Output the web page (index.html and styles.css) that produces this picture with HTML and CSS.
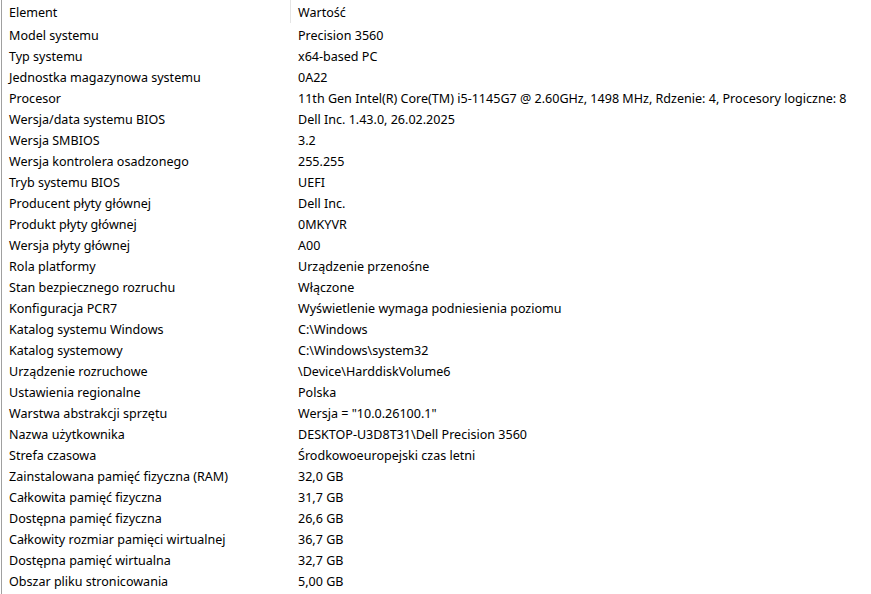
FILE: index.html
```html
<!DOCTYPE html>
<html lang="pl">
<head>
<meta charset="utf-8">
<title>Informacje o systemie</title>
<link rel="stylesheet" href="styles.css">
</head>
<body>
<div class="list">
  <div class="header">
    <div class="hcell hfirst">Element</div>
    <div class="hcell">Wartość</div>
  </div>
  <div class="rows">
    <div class="row"><span class="c1">Model systemu</span><span class="c2">Precision 3560</span></div>
    <div class="row"><span class="c1">Typ systemu</span><span class="c2">x64-based PC</span></div>
    <div class="row"><span class="c1">Jednostka magazynowa systemu</span><span class="c2">0A22</span></div>
    <div class="row"><span class="c1">Procesor</span><span class="c2">11th Gen Intel(R) Core(TM) i5-1145G7 @ 2.60GHz, 1498 MHz, Rdzenie: 4, Procesory logiczne: 8</span></div>
    <div class="row"><span class="c1">Wersja/data systemu BIOS</span><span class="c2">Dell Inc. 1.43.0, 26.02.2025</span></div>
    <div class="row"><span class="c1">Wersja SMBIOS</span><span class="c2">3.2</span></div>
    <div class="row"><span class="c1">Wersja kontrolera osadzonego</span><span class="c2">255.255</span></div>
    <div class="row"><span class="c1">Tryb systemu BIOS</span><span class="c2">UEFI</span></div>
    <div class="row"><span class="c1">Producent płyty głównej</span><span class="c2">Dell Inc.</span></div>
    <div class="row"><span class="c1">Produkt płyty głównej</span><span class="c2">0MKYVR</span></div>
    <div class="row"><span class="c1">Wersja płyty głównej</span><span class="c2">A00</span></div>
    <div class="row"><span class="c1">Rola platformy</span><span class="c2">Urządzenie przenośne</span></div>
    <div class="row"><span class="c1">Stan bezpiecznego rozruchu</span><span class="c2">Włączone</span></div>
    <div class="row"><span class="c1">Konfiguracja PCR7</span><span class="c2">Wyświetlenie wymaga podniesienia poziomu</span></div>
    <div class="row"><span class="c1">Katalog systemu Windows</span><span class="c2">C:\Windows</span></div>
    <div class="row"><span class="c1">Katalog systemowy</span><span class="c2">C:\Windows\system32</span></div>
    <div class="row"><span class="c1">Urządzenie rozruchowe</span><span class="c2">\Device\HarddiskVolume6</span></div>
    <div class="row"><span class="c1">Ustawienia regionalne</span><span class="c2">Polska</span></div>
    <div class="row"><span class="c1">Warstwa abstrakcji sprzętu</span><span class="c2">Wersja = "10.0.26100.1"</span></div>
    <div class="row"><span class="c1">Nazwa użytkownika</span><span class="c2">DESKTOP-U3D8T31\Dell Precision 3560</span></div>
    <div class="row"><span class="c1">Strefa czasowa</span><span class="c2">Środkowoeuropejski czas letni</span></div>
    <div class="row"><span class="c1">Zainstalowana pamięć fizyczna (RAM)</span><span class="c2">32,0 GB</span></div>
    <div class="row"><span class="c1">Całkowita pamięć fizyczna</span><span class="c2">31,7 GB</span></div>
    <div class="row"><span class="c1">Dostępna pamięć fizyczna</span><span class="c2">26,6 GB</span></div>
    <div class="row"><span class="c1">Całkowity rozmiar pamięci wirtualnej</span><span class="c2">36,7 GB</span></div>
    <div class="row"><span class="c1">Dostępna pamięć wirtualna</span><span class="c2">32,7 GB</span></div>
    <div class="row"><span class="c1">Obszar pliku stronicowania</span><span class="c2">5,00 GB</span></div>
  </div>
</div>
</body>
</html>
```
FILE: styles.css
```css
html, body {
  margin: 0;
  padding: 0;
  background: #ffffff;
}
body {
  font-family: "Noto Sans", "Open Sans", sans-serif;
  font-size: 12.55px;
  color: #000000;
  width: 871px;
  height: 594px;
  overflow: hidden;
}
.list {
  margin-left: 1px;
  border-left: 1px solid #a0a0a0;
  height: 594px;
}
.header {
  display: grid;
  grid-template-columns: 289px 1fr;
  height: 25px;
}
.hcell {
  padding-left: 7px;
  padding-top: 1px;
  line-height: 23px;
  white-space: nowrap;
}
.hfirst {
  border-right: 1px solid #e5e5e5;
  height: 23px;
  padding-top: 0;
  line-height: 25px;
}
.row {
  display: grid;
  grid-template-columns: 289px 1fr;
  height: 21px;
  line-height: 21px;
  white-space: nowrap;
}
.c1 {
  padding-left: 7px;
}
.c2 {
  padding-left: 7px;
}
```
